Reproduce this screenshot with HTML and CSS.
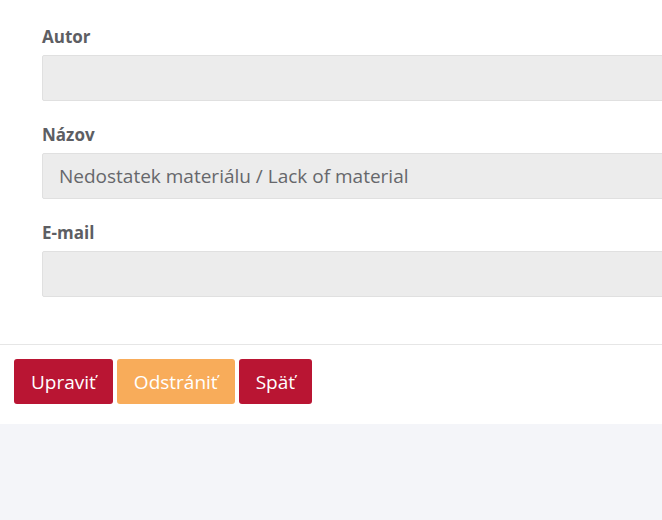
FILE: index.html
```html
<!DOCTYPE html>
<html lang="sk">
<head>
<meta charset="utf-8">
<link rel="stylesheet" href="styles.css">
</head>
<body>
<div class="card">
  <form class="form">
    <div class="field">
      <label class="label">Autor</label>
      <div class="input"></div>
    </div>
    <div class="field">
      <label class="label">Názov</label>
      <div class="input">Nedostatek materiálu / Lack of material</div>
    </div>
    <div class="field">
      <label class="label">E-mail</label>
      <div class="input"></div>
    </div>
  </form>
  <div class="actions">
    <button class="btn btn-red" type="button">Upraviť</button>
    <button class="btn btn-orange" type="button">Odstrániť</button>
    <button class="btn btn-red" type="button">Späť</button>
  </div>
</div>
</body>
</html>
```
FILE: styles.css
```css
html, body {
  margin: 0;
  padding: 0;
  overflow: hidden;
}
body {
  background: #f4f5f9;
  font-family: "Open Sans", "Noto Sans", sans-serif;
  height: 520px;
}
.card {
  background: #ffffff;
  width: 662px;
  overflow: hidden;
}
.form {
  padding: 26px 0 47px 42px;
  display: flex;
  flex-direction: column;
  gap: 23px;
  border-bottom: 1px solid #e6e6e6;
}
.field {
  display: flex;
  flex-direction: column;
  gap: 7px;
}
.label {
  font-size: 17px;
  font-weight: 700;
  line-height: 22px;
  color: #5d5e63;
}
.input {
  box-sizing: border-box;
  width: 640px;
  height: 46px;
  background: #ececec;
  border: 1px solid #e0e0e0;
  border-radius: 2px;
  padding: 0 16px;
  font-size: 19px;
  line-height: 44px;
  color: #66676b;
}
.actions {
  display: flex;
  gap: 4px;
  padding: 14px 0 20px 14px;
}
.btn {
  font-family: "Open Sans", "Noto Sans", sans-serif;
  font-size: 19px;
  color: #ffffff;
  border: none;
  border-radius: 3px;
  height: 45px;
  padding: 0 17px;
  cursor: pointer;
}
.btn-red {
  background: #b91533;
}
.btn-orange {
  background: #f8ac5a;
}
```
